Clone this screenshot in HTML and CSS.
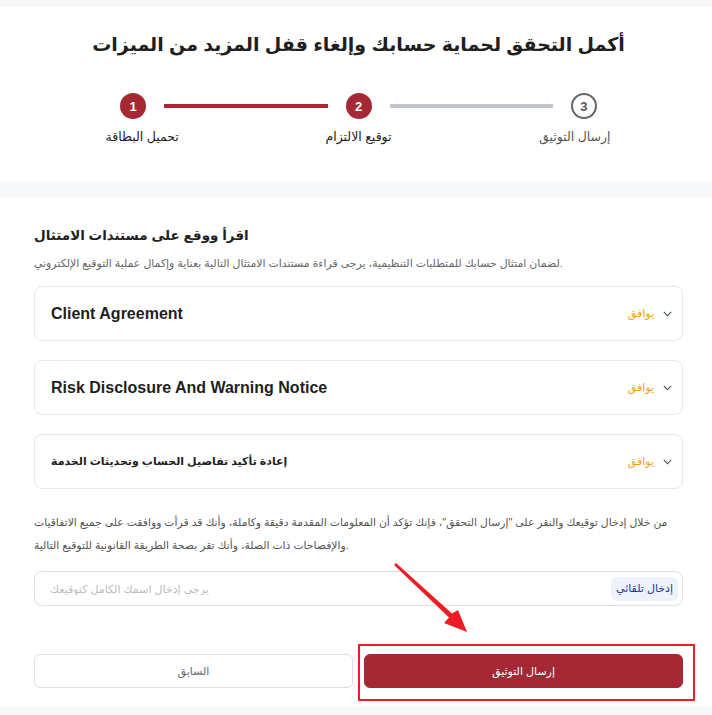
FILE: index.html
```html
<!DOCTYPE html>
<html lang="ar">
<head>
    <meta charset="UTF-8">
    <meta name="viewport" content="width=device-width, initial-scale=1.0">
    <title>التحقق من الحساب</title>
    <link rel="stylesheet" href="styles.css">
</head>
<body>
    <div class="page">
        <section class="top">
            <h1 class="title">أكمل التحقق لحماية حسابك وإلغاء قفل المزيد من الميزات</h1>
            <div class="steps">
                <div class="step done">
                    <div class="step-row">
                        <span class="line hidden"></span>
                        <span class="dot">1</span>
                        <span class="line red right"></span>
                    </div>
                    <div class="step-label">تحميل البطاقة</div>
                </div>
                <div class="step done">
                    <div class="step-row">
                        <span class="line red left"></span>
                        <span class="dot">2</span>
                        <span class="line grey right"></span>
                    </div>
                    <div class="step-label">توقيع الالتزام</div>
                </div>
                <div class="step todo">
                    <div class="step-row">
                        <span class="line grey left"></span>
                        <span class="dot">3</span>
                        <span class="line hidden"></span>
                    </div>
                    <div class="step-label">إرسال التوثيق</div>
                </div>
            </div>
        </section>

        <section class="docs">
            <h2 class="docs-title">اقرأ ووقع على مستندات الامتثال</h2>
            <p class="docs-sub">لضمان امتثال حسابك للمتطلبات التنظيمية، يرجى قراءة مستندات الامتثال التالية بعناية وإكمال عملية التوقيع الإلكتروني.</p>

            <div class="doc">
                <span class="doc-name">Client Agreement</span>
                <span class="doc-status">يوافق
                    <svg width="9" height="6" viewBox="0 0 9 6"><path d="M0.8 0.8 L4.5 4.6 L8.2 0.8" fill="none" stroke="#4a5568" stroke-width="1.1"/></svg>
                </span>
            </div>
            <div class="doc">
                <span class="doc-name">Risk Disclosure And Warning Notice</span>
                <span class="doc-status">يوافق
                    <svg width="9" height="6" viewBox="0 0 9 6"><path d="M0.8 0.8 L4.5 4.6 L8.2 0.8" fill="none" stroke="#4a5568" stroke-width="1.1"/></svg>
                </span>
            </div>
            <div class="doc">
                <span class="doc-name ar">إعادة تأكيد تفاصيل الحساب وتحديثات الخدمة</span>
                <span class="doc-status">يوافق
                    <svg width="9" height="6" viewBox="0 0 9 6"><path d="M0.8 0.8 L4.5 4.6 L8.2 0.8" fill="none" stroke="#4a5568" stroke-width="1.1"/></svg>
                </span>
            </div>

            <p class="notice">من خلال إدخال توقيعك والنقر على "إرسال التحقق"، فإنك تؤكد أن المعلومات المقدمة دقيقة وكاملة، وأنك قد قرأت ووافقت على جميع الاتفاقيات<br>والإفصاحات ذات الصلة، وأنك تقر بصحة الطريقة القانونية للتوقيع التالية.</p>

            <div class="sign">
                <input class="sign-input" type="text" placeholder="يرجى إدخال اسمك الكامل كتوقيعك">
                <button class="auto">إدخال تلقائي</button>
            </div>

            <div class="actions">
                <button class="btn prev">السابق</button>
                <button class="btn submit">إرسال التوثيق</button>
            </div>
        </section>

        <!-- annotation drawn over the screenshot -->
        <svg class="marks" width="712" height="715" viewBox="0 0 712 715">
            <polygon points="394,565 396,563 452,613.5 458,610 467,632 444,623 449,617.5" fill="#ee1c25"/>
            <rect x="359" y="645" width="335" height="55" fill="none" stroke="#ee1c25" stroke-width="2"/>
        </svg>
    </div>
</body>
</html>
```

FILE: styles.css
```css
body {
    margin: 0;
    background-color: #f7f8fa;
    font-family: "Liberation Sans", "DejaVu Sans", sans-serif;
    color: #222;
}

.page {
    position: relative;
    width: 712px;
    height: 715px;
    padding-top: 7px;
    box-sizing: border-box;
}

.top {
    background-color: #fff;
    height: 175px;
    padding: 22px 29px 0 34px;
    box-sizing: border-box;
}

.title {
    margin: 0;
    font-size: 19px;
    line-height: 32px;
    font-weight: bold;
    text-align: center;
    white-space: nowrap;
    color: #1f1f1f;
}

.steps {
    display: grid;
    grid-template-columns: repeat(3, 1fr);
    margin-top: 32px;
}

.step-row {
    display: flex;
    align-items: center;
}

.line {
    flex: 1;
    height: 4px;
}

.line.left {
    margin-right: 18px;
}

.line.right {
    margin-left: 18px;
}

.line.red {
    background-color: #a52834;
}

.line.grey {
    background-color: #c2c5cc;
}

.dot {
    width: 26px;
    height: 26px;
    border-radius: 50%;
    box-sizing: border-box;
    display: flex;
    align-items: center;
    justify-content: center;
    font-size: 13px;
    font-weight: bold;
}

.done .dot {
    background-color: #a52834;
    color: #fff;
}

.todo .dot {
    border: 2px solid #666;
    color: #555;
    background-color: #fff;
}

.step-label {
    text-align: center;
    font-size: 12.5px;
    line-height: 18px;
    margin-top: 9px;
    color: #222;
}

.todo .step-label {
    color: #555;
}

.docs {
    background-color: #fff;
    margin-top: 15px;
    height: 510px;
    padding: 27px 29px 0 34px;
    box-sizing: border-box;
}

.docs-title {
    margin: 0;
    font-size: 13.5px;
    line-height: 24px;
    font-weight: bold;
    color: #1f1f1f;
}

.docs-sub {
    margin: 6px 0 14px;
    font-size: 10.9px;
    line-height: 18px;
    color: #666;
}

.doc {
    display: flex;
    align-items: center;
    justify-content: space-between;
    height: 55px;
    box-sizing: border-box;
    border: 1px solid #e4e7ed;
    border-radius: 8px;
    padding: 0 10px 0 16px;
    margin-bottom: 19px;
}

.doc:last-of-type {
    height: 56px;
}

.doc-name {
    font-size: 16px;
    font-weight: bold;
    color: #1f1f1f;
}

.doc-name.ar {
    font-size: 11px;
}

.doc-status {
    display: flex;
    align-items: center;
    gap: 9px;
    font-size: 11px;
    color: #f0a31c;
}

.notice {
    margin: 22px 0 14px;
    font-size: 10.8px;
    line-height: 23px;
    white-space: nowrap;
    color: #555;
}

.sign {
    display: flex;
    align-items: center;
    height: 35px;
    box-sizing: border-box;
    border: 1px solid #dcdfe6;
    border-radius: 8px;
    padding: 0 4px 0 15px;
}

.sign-input {
    flex: 1;
    border: none;
    outline: none;
    font-family: inherit;
    font-size: 11px;
    color: #333;
    background: transparent;
    padding: 0;
}

.sign-input::placeholder {
    color: #b8bcc4;
}

.auto {
    height: 24px;
    border: none;
    border-radius: 6px;
    background-color: #eef2fc;
    color: #26358c;
    font-family: inherit;
    font-size: 11px;
    padding: 0 5px;
}

.actions {
    display: flex;
    gap: 11px;
    margin-top: 48px;
}

.btn {
    flex: 1;
    height: 34px;
    border-radius: 6px;
    font-family: inherit;
    font-size: 11px;
    cursor: pointer;
}

.prev {
    background-color: #fff;
    border: 1px solid #dcdfe6;
    color: #666;
}

.submit {
    background-color: #a52834;
    border: 1px solid #a52834;
    color: #fff;
}

.marks {
    position: absolute;
    top: 0;
    left: 0;
    pointer-events: none;
}
```
